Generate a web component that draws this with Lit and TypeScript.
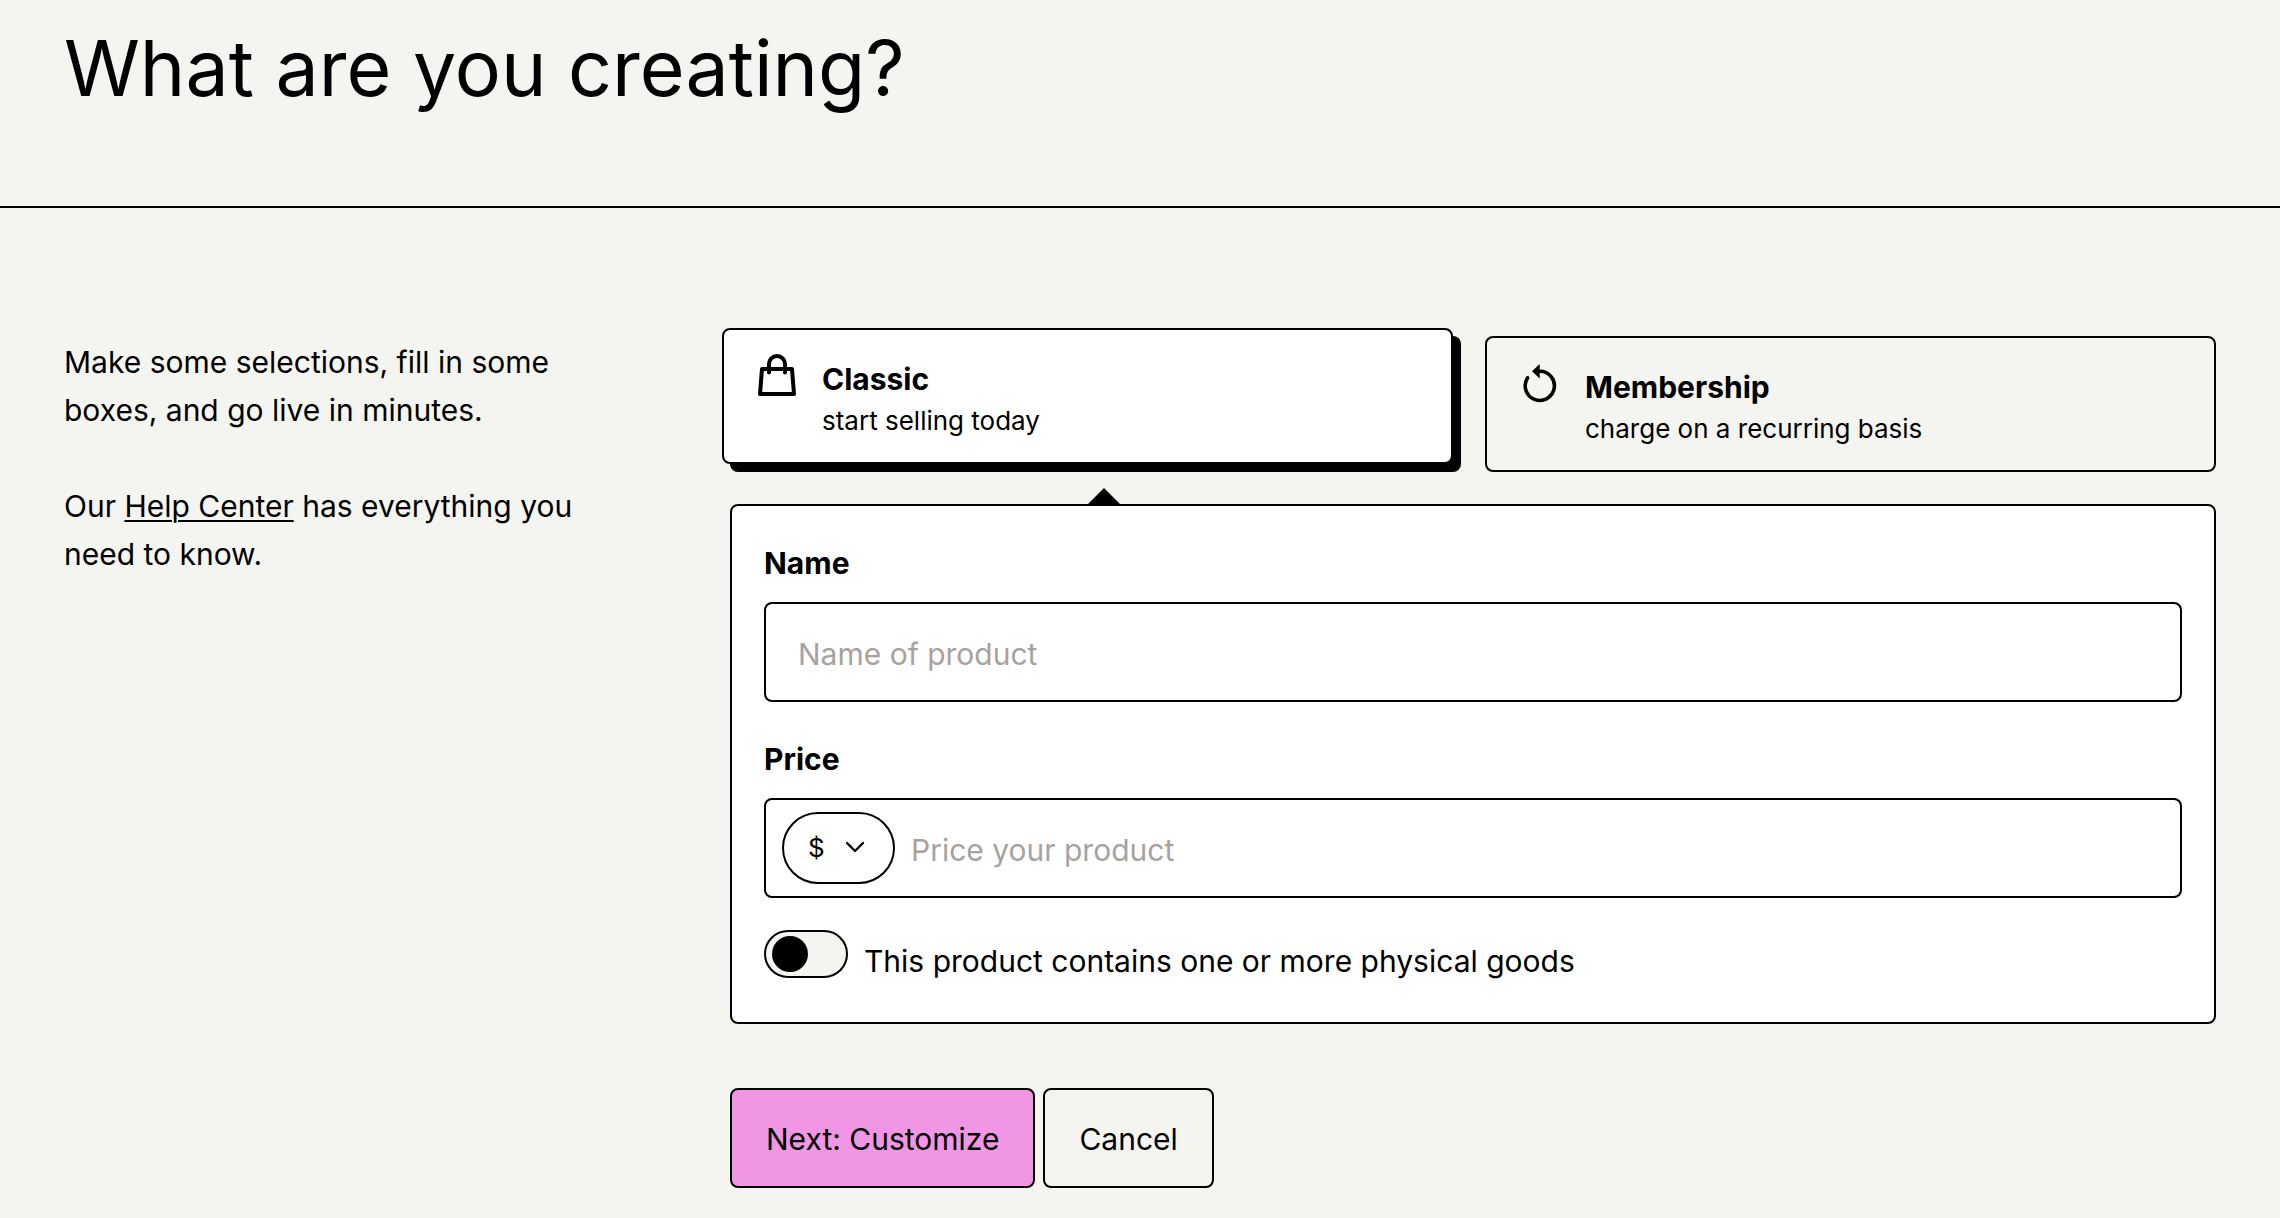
import { LitElement, html, css, svg } from "lit";
import { customElement, state } from "lit/decorators.js";

const bagIcon = html`<svg class="icon" viewBox="0 0 42 42" aria-hidden="true">
  <g fill="none" stroke="#000" stroke-width="4" stroke-linejoin="round" stroke-linecap="round">
    <path d="M6 15H36L38 40H4Z" />
    <path d="M13 18.5V10A8 8 0 0 1 29 10V18.5" />
  </g>
</svg>`;

const renewIcon = html`<svg class="icon" viewBox="0 0 42 42" aria-hidden="true">
  <path d="M8.6 15.8A14.6 14.6 0 1 0 20.5 9.2" fill="none" stroke="#000" stroke-width="3.6" stroke-linecap="round" />
  <path d="M13 9.2L20.7 2V16.4Z" fill="#000" />
</svg>`;

const kinds = [
  { id: "classic", title: "Classic", note: "start selling today", icon: bagIcon },
  { id: "membership", title: "Membership", note: "charge on a recurring basis", icon: renewIcon },
];

@customElement("app-root")
export class AppRoot extends LitElement {
  @state() private kind = "classic";

  static styles = css`
    :host {
      display: block;
      min-height: 100vh;
      background: #f4f4f0;
      color: #000;
      font: 400 30px/48px Inter, "Liberation Sans", sans-serif;
    }
    * { box-sizing: border-box; }
    h1, p { margin: 0; }
    button, input, select { font: inherit; color: inherit; margin: 0; }
    header { padding: 18px 64px 88px; border-bottom: 2px solid #000; }
    h1 { font-size: 77px; font-weight: 400; line-height: 100px; }
    main {
      display: grid;
      grid-template-columns: 285fr 743fr;
      column-gap: 96px;
      padding: 128px 64px 24px;
    }
    .intro { display: flex; flex-direction: column; gap: 48px; max-width: 560px; padding-top: 2px; }
    a { color: inherit; text-decoration: underline; text-decoration-thickness: 2px; text-underline-offset: 3px; }
    .kinds { display: grid; grid-template-columns: 1fr 1fr; gap: 24px; }
    .kind {
      display: flex;
      align-items: flex-start;
      gap: 24px;
      padding: 24px 32px 20px;
      border: 2px solid #000;
      border-radius: 8px;
      background: transparent;
      text-align: left;
      cursor: pointer;
    }
    .kind.on { background: #fff; transform: translate(-8px, -8px); box-shadow: 8px 8px 0 #000; }
    .icon { width: 42px; height: 42px; flex: none; }
    .words { display: flex; flex-direction: column; padding-top: 4px; }
    .title { font-weight: 700; line-height: 42px; }
    .note { font-size: 26px; line-height: 42px; }
    .panel {
      position: relative;
      display: flex;
      flex-direction: column;
      gap: 32px;
      margin-top: 32px;
      padding: 32px 32px 30px;
      border: 2px solid #000;
      border-radius: 8px;
      background: #fff;
    }
    .pointer {
      position: absolute;
      bottom: 100%;
      left: 25%;
      width: 32px;
      height: 18px;
      margin-left: -15px;
    }
    .pointer.right { left: 75%; }
    .field { display: flex; flex-direction: column; gap: 14px; }
    .field label { font-weight: 700; line-height: 50px; }
    .box {
      display: flex;
      align-items: center;
      height: 100px;
      border: 2px solid #000;
      border-radius: 8px;
      background: #fff;
      overflow: hidden;
    }
    .text {
      flex: 1;
      min-width: 0;
      height: 96px;
      padding: 4px 32px 0;
      border: 0;
      outline: 0;
      background: none;
    }
    .text::placeholder { color: #a8a29e; opacity: 1; }
    .price .text { padding-left: 16px; }
    .currency { position: relative; flex: none; margin-left: 16px; }
    .currency select {
      display: block;
      appearance: none;
      width: 113px;
      height: 72px;
      padding: 0 48px 0 24px;
      border: 2px solid #000;
      border-radius: 36px;
      background: #fff;
      font-size: 26px;
    }
    .chevron { position: absolute; right: 30px; top: 28px; width: 20px; height: 14px; pointer-events: none; }
    .shipping { display: flex; align-items: flex-start; gap: 16px; line-height: 62px; }
    .switch {
      appearance: none;
      flex: none;
      display: flex;
      align-items: center;
      width: 84px;
      height: 48px;
      padding: 0 6px;
      border: 2px solid #000;
      border-radius: 24px;
      background: #f4f4f0;
    }
    .switch::before { content: ""; width: 36px; height: 36px; border-radius: 50%; background: #000; }
    .switch:checked { justify-content: flex-end; }
    .actions { display: flex; gap: 8px; margin-top: 64px; }
    .action {
      height: 100px;
      padding: 2px 34px 0;
      border: 2px solid #000;
      border-radius: 8px;
      background: transparent;
      cursor: pointer;
    }
    .action.primary { background: #f096e4; }
  `;

  render() {
    return html`
      <header><h1>What are you creating?</h1></header>
      <main>
        <div class="intro">
          <p>Make some selections, fill in some boxes, and go live in minutes.</p>
          <p>Our <a href="#help">Help Center</a> has everything you need to know.</p>
        </div>
        <form @submit=${(e: Event) => e.preventDefault()}>
          <div class="kinds">
            ${kinds.map(
              (k) => html`<button
                type="button"
                class="kind ${this.kind === k.id ? "on" : ""}"
                aria-pressed=${this.kind === k.id}
                @click=${() => (this.kind = k.id)}
              >
                ${k.icon}
                <span class="words"><span class="title">${k.title}</span><span class="note">${k.note}</span></span>
              </button>`,
            )}
          </div>
          <div class="panel">
            <svg class="pointer ${this.kind === "membership" ? "right" : ""}" viewBox="0 0 32 18" aria-hidden="true">
              ${svg`<path d="M0 18V16L16 0L32 16V18Z" />`}
            </svg>
            <div class="field">
              <label for="name">Name</label>
              <div class="box"><input class="text" id="name" type="text" placeholder="Name of product" /></div>
            </div>
            <div class="field">
              <label for="price">Price</label>
              <div class="box price">
                <div class="currency">
                  <select aria-label="Currency">
                    <option>$</option>
                  </select>
                  <svg class="chevron" viewBox="0 0 20 14" aria-hidden="true">
                    <path d="M2 3L10 11L18 3" fill="none" stroke="#000" stroke-width="2.4" stroke-linecap="round" stroke-linejoin="round" />
                  </svg>
                </div>
                <input class="text" id="price" type="text" inputmode="decimal" placeholder="Price your product" />
              </div>
            </div>
            <div class="shipping">
              <input class="switch" id="physical" type="checkbox" role="switch" />
              <label for="physical">This product contains one or more physical goods</label>
            </div>
          </div>
          <div class="actions">
            <button class="action primary" type="submit">Next: Customize</button>
            <button class="action" type="button">Cancel</button>
          </div>
        </form>
      </main>
    `;
  }
}
